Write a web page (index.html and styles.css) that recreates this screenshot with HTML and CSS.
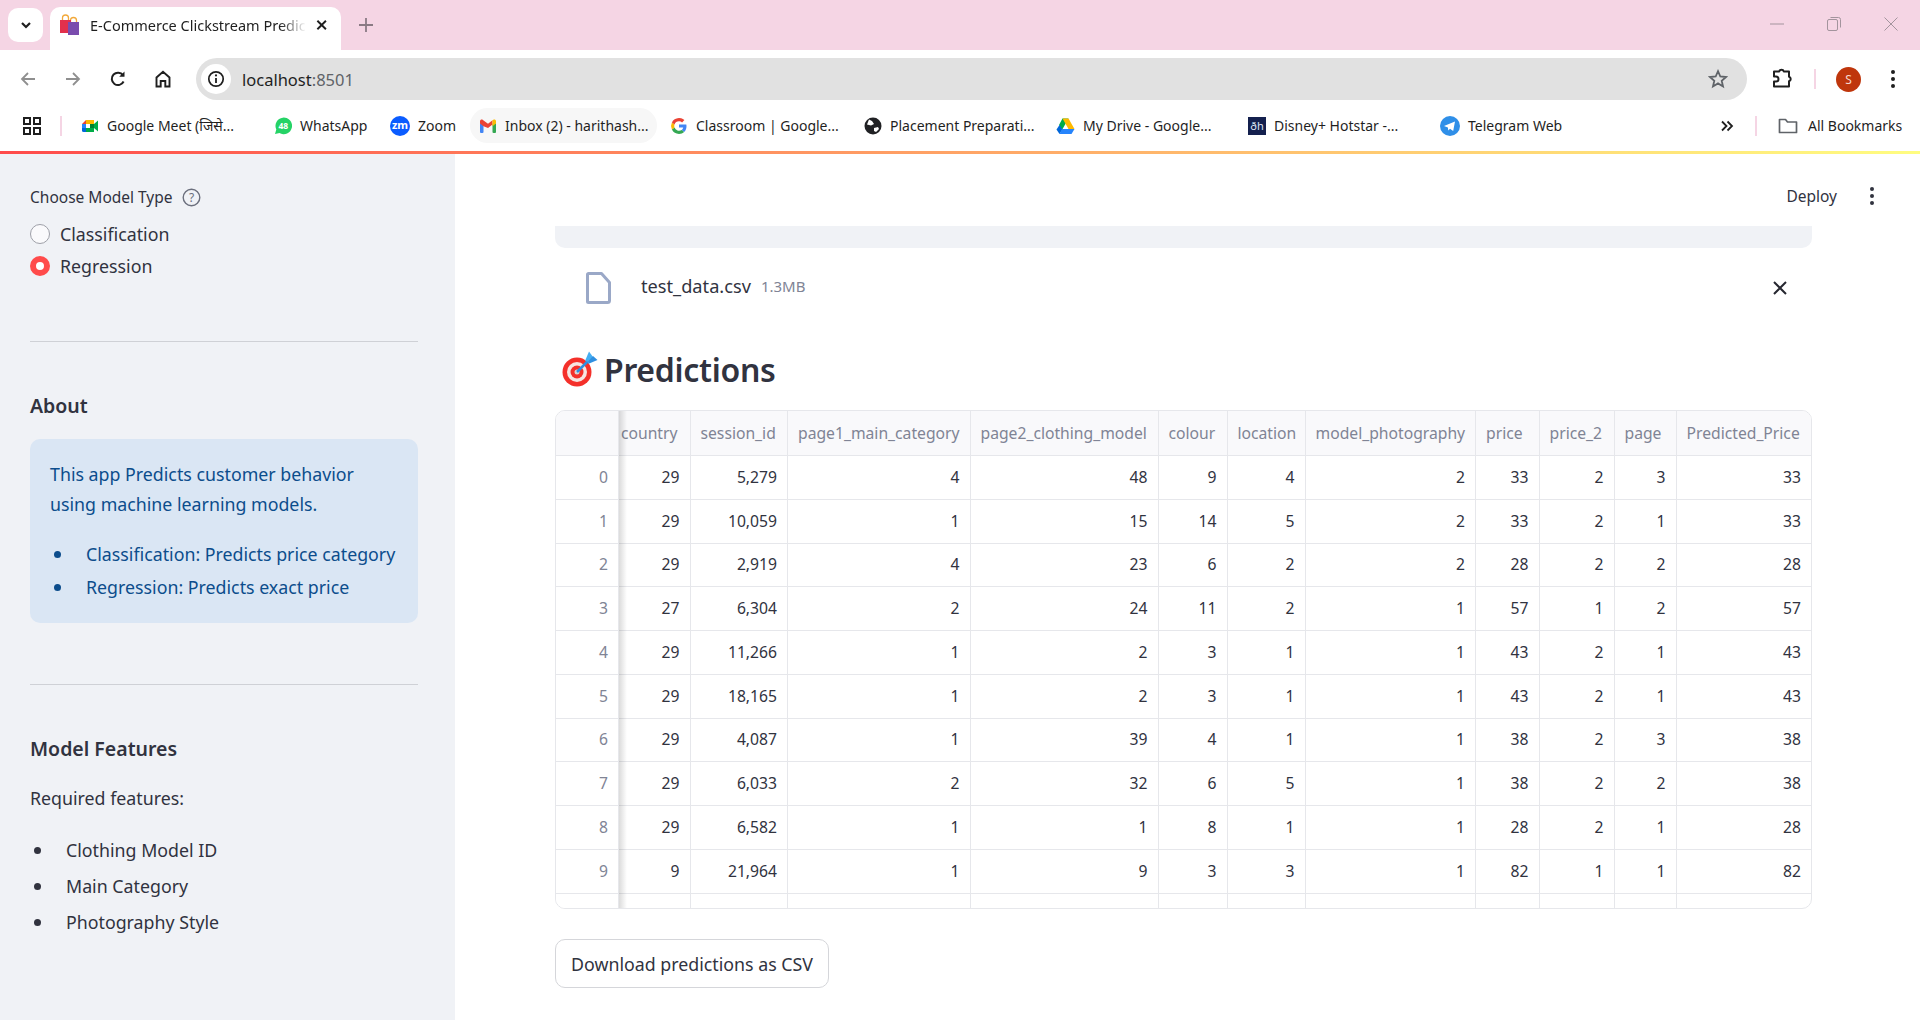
FILE: index.html
```html
<!DOCTYPE html>
<html lang="en">
<head>
  <meta charset="UTF-8" />
  <title>E-Commerce Clickstream Prediction</title>
  <meta name="viewport" content="width=device-width, initial-scale=1.0" />
  <link rel="stylesheet" href="styles.css">
</head>
<body>
  <!-- browser chrome -->
  <div class="tabstrip">
    <div class="tab-search">
      <svg width="14" height="14" viewBox="0 0 14 14"><path d="M3 5l4 4 4-4" fill="none" stroke="#1f1f1f" stroke-width="2.2"/></svg>
    </div>
    <div class="tab">
      <svg class="favicon" width="22" height="22" viewBox="0 0 22 22">
        <path d="M3.500 6V4a3 3 0 0 1 6 0v2M11.500 8V6.500a3 3 0 0 1 6 0V8" fill="none" stroke="#f2a93b" stroke-width="1.300"/>
        <rect x="1" y="6" width="11" height="13" fill="#e2304c"/>
        <rect x="9" y="8" width="11" height="13" fill="#7a4cae"/>
      </svg>
      <span class="tab-title">E-Commerce Clickstream Predic</span>
      <svg width="14" height="14" viewBox="0 0 14 14"><path d="M2.500 2.500l9 9M11.500 2.500l-9 9" stroke="#1f1f1f" stroke-width="2"/></svg>
    </div>
    <svg class="new-tab" width="16" height="16" viewBox="0 0 16 16"><path d="M8 1v14M1 8h14" stroke="#8a7a84" stroke-width="1.800"/></svg>
    <div class="win-btns">
      <svg width="16" height="16" viewBox="0 0 16 16"><path d="M1 8h14" stroke="#a3949d" stroke-width="1"/></svg>
      <svg width="16" height="16" viewBox="0 0 16 16"><rect x="1.500" y="3.500" width="10" height="11" rx="1.500" fill="none" stroke="#a3949d"/><path d="M4.500 1.500h8a2 2 0 0 1 2 2v8" fill="none" stroke="#a3949d"/></svg>
      <svg width="16" height="16" viewBox="0 0 16 16"><path d="M1.500 1.500l13 13M14.500 1.500l-13 13" stroke="#a3949d" stroke-width="1"/></svg>
    </div>
  </div>

  <div class="toolbar">
    <svg class="nav-btn" width="18" height="18" viewBox="0 0 18 18"><path d="M16 9H3M9 3L3 9l6 6" fill="none" stroke="#8f8f8f" stroke-width="1.800"/></svg>
    <svg class="nav-btn" width="18" height="18" viewBox="0 0 18 18"><path d="M2 9h13M9 3l6 6-6 6" fill="none" stroke="#8f8f8f" stroke-width="1.800"/></svg>
    <svg class="nav-btn" width="18" height="18" viewBox="0 0 18 18"><path d="M14.600 11.500A6.200 6.200 0 1 1 14 5.200" fill="none" stroke="#1f1f1f" stroke-width="2"/><path d="M15.500 1.500v5.300h-5.300z" fill="#1f1f1f"/></svg>
    <svg class="nav-btn" width="18" height="18" viewBox="0 0 18 18"><path d="M2.500 16.500V7.500L9 1.800l6.500 5.700v9h-4.200v-5.500H6.700v5.500z" fill="none" stroke="#1f1f1f" stroke-width="1.900"/></svg>
    <div class="omnibox">
      <span class="site-info">
        <svg width="18" height="18" viewBox="0 0 18 18"><circle cx="9" cy="9" r="7.200" fill="none" stroke="#1f1f1f" stroke-width="1.700"/><path d="M9 8v5" stroke="#1f1f1f" stroke-width="1.800"/><circle cx="9" cy="5.400" r="1.100" fill="#1f1f1f"/></svg>
      </span>
      <span class="url">localhost<span class="url-port">:8501</span></span>
      <svg class="star" width="20" height="20" viewBox="0 0 20 20"><path d="M10 2.200l2.300 5.300 5.700.5-4.300 3.800 1.300 5.600-5-3-5 3 1.300-5.600L2 8l5.700-.5z" fill="none" stroke="#5f6368" stroke-width="1.800"/></svg>
    </div>
    <svg class="puzzle" width="22" height="22" viewBox="0 0 22 22"><path d="M3 3.500h5.200a2.400 2.400 0 0 1 4.600 0H18v5.200a2.400 2.400 0 0 1 0 4.600v5.200H3v-5h2a2.500 2.500 0 0 0 0-5H3z" fill="none" stroke="#1f1f1f" stroke-width="2" stroke-linejoin="round"/></svg>
    <span class="tool-sep"></span>
    <span class="avatar">S</span>
    <span class="kebab kebab-dark"><i></i><i></i><i></i></span>
  </div>

  <div class="bookmarks">
    <svg class="apps" width="18" height="18" viewBox="0 0 18 18"><g fill="none" stroke="#1f1f1f" stroke-width="2"><rect x="1" y="1" width="6" height="6"/><rect x="11" y="1" width="6" height="6"/><rect x="1" y="11" width="6" height="6"/><rect x="11" y="11" width="6" height="6"/></g></svg>
    <span class="tool-sep"></span>
    <div class="bm-list">
      <div class="bm">
        <svg width="18" height="18" viewBox="0 0 18 18"><rect x="5" y="3" width="8" height="4" fill="#ffba00"/><path d="M5 3v4H1z" fill="#ea4335"/><rect x="1" y="7" width="4" height="4" fill="#2684fc"/><path d="M1 11h4v4H2.500A1.500 1.500 0 0 1 1 13.500z" fill="#0066da"/><rect x="5" y="11" width="8" height="4" fill="#00ac47"/><rect x="9" y="7" width="4" height="4" fill="#00832d"/><path d="M13 7l4-3.500v11L13 11z" fill="#00ac47"/></svg>
        <span>Google Meet (जिसे...</span>
      </div>
      <div class="bm">
        <svg width="18" height="18" viewBox="0 0 18 18"><path d="M1 17l1.300-4.500A8.300 8.300 0 1 1 5.500 16z" fill="#25d366"/><text x="9.300" y="12" text-anchor="middle" class="icon-text">48</text></svg>
        <span>WhatsApp</span>
      </div>
      <div class="bm">
        <svg width="20" height="20" viewBox="0 0 20 20"><circle cx="10" cy="10" r="10" fill="#0b5cff"/><text x="10" y="13.400" text-anchor="middle" class="icon-text icon-text-big">zm</text></svg>
        <span>Zoom</span>
      </div>
      <div class="bm bm-active">
        <svg width="18" height="18" viewBox="0 0 18 18"><rect x="1" y="6" width="3.500" height="10" rx="1" fill="#4285f4"/><rect x="13.500" y="6" width="3.500" height="10" rx="1" fill="#34a853"/><path d="M4.500 9.300L1 6.500V4.200C1 2.800 2.700 2 3.900 2.900L9 6.700l4.500-3.400v4.200L9 11z" fill="#ea4335"/><path d="M13.500 3.300l.6-.4C15.300 2 17 2.800 17 4.200v2.300L13.500 9.300z" fill="#fbbc04"/></svg>
        <span>Inbox (2) - harithash...</span>
      </div>
      <div class="bm">
        <svg width="18" height="18" viewBox="0 0 18 18"><path d="M16.500 9.200c0-.6-.1-1.100-.2-1.600H9v3h4.200a3.600 3.600 0 0 1-1.600 2.400l2.500 2c1.500-1.300 2.400-3.300 2.400-5.800z" fill="#4285f4"/><path d="M9 17c2.100 0 3.900-.7 5.100-1.900l-2.500-2a4.800 4.800 0 0 1-7.100-2.500L1.900 12.600A8 8 0 0 0 9 17z" fill="#34a853"/><path d="M4.500 10.600a4.800 4.800 0 0 1 0-3.200L1.900 5.400a8 8 0 0 0 0 7.200z" fill="#fbbc05"/><path d="M9 4.200c1.200 0 2.300.4 3.100 1.200l2.300-2.300A8 8 0 0 0 1.900 5.400l2.600 2A4.800 4.800 0 0 1 9 4.200z" fill="#ea4335"/></svg>
        <span>Classroom | Google...</span>
      </div>
      <div class="bm">
        <svg width="18" height="18" viewBox="0 0 18 18"><circle cx="9" cy="9" r="8.500" fill="#202124"/><path d="M5 2.500l3 1.500 2 3-3 1.500-4-1zM10 11l4-1 1 2-3 3-2-1z" fill="#fff"/></svg>
        <span>Placement Preparati...</span>
      </div>
      <div class="bm">
        <svg width="19" height="18" viewBox="0 0 19 18"><path d="M6.500 1.500h6L6 13 3 8z" fill="#00ac47"/><path d="M12.500 1.500L18.500 12h-6L6.500 1.500z" fill="#ffba00"/><path d="M.5 12.500L3.500 8 6.500 12.500l-3 4.500z" fill="#0066da"/><path d="M6 12h12.500l-3 5h-12z" fill="#2684fc"/></svg>
        <span>My Drive - Google...</span>
      </div>
      <div class="bm">
        <span class="disney">ðh</span>
        <span>Disney+ Hotstar -...</span>
      </div>
      <div class="bm">
        <svg width="20" height="20" viewBox="0 0 20 20"><circle cx="10" cy="10" r="10" fill="#2f8fe8"/><path d="M4 10l11-4.500-1.800 9.500-3.200-2.300-1.700 1.700-.4-3z" fill="#fff"/></svg>
        <span>Telegram Web</span>
      </div>
    </div>
    <svg class="more" width="14" height="14" viewBox="0 0 14 14"><path d="M2 2.500L6.500 7 2 11.500M7.500 2.500L12 7l-4.500 4.500" fill="none" stroke="#1f1f1f" stroke-width="1.800"/></svg>
    <span class="tool-sep"></span>
    <div class="all-bm">
      <svg width="20" height="18" viewBox="0 0 20 18"><path d="M1.500 15.500V2.500h6l2 2.500h9v10.500z" fill="none" stroke="#5f6368" stroke-width="1.700" stroke-linejoin="round"/></svg>
      <span>All Bookmarks</span>
    </div>
  </div>
  <div class="top-gradient"></div>

  <!-- app -->
  <div class="app">
    <aside class="sidebar">
      <div class="radio-label">
        <span>Choose Model Type</span>
        <svg width="19" height="19" viewBox="0 0 19 19"><circle cx="9.500" cy="9.500" r="8.300" fill="none" stroke="#6b6f7d" stroke-width="1.400"/><text x="9.500" y="13.700" text-anchor="middle" class="help-q">?</text></svg>
      </div>
      <div class="radio"><span class="radio-dot"></span>Classification</div>
      <div class="radio"><span class="radio-dot radio-on"></span>Regression</div>
      <hr class="divider divider-first">
      <h3 class="side-title">About</h3>
      <div class="info-box">
        <p>This app Predicts customer behavior using machine learning models.</p>
        <ul>
          <li>Classification: Predicts price category</li>
          <li>Regression: Predicts exact price</li>
        </ul>
      </div>
      <hr class="divider">
      <h3 class="side-title">Model Features</h3>
      <p class="side-text">Required features:</p>
      <ul class="side-list">
        <li>Clothing Model ID</li>
        <li>Main Category</li>
        <li>Photography Style</li>
      </ul>
    </aside>

    <main class="main">
      <div class="main-head">
        <span class="deploy">Deploy</span>
        <span class="kebab"><i></i><i></i><i></i></span>
      </div>
      <div class="content">
        <div class="dropzone-tail"></div>
        <div class="file-row">
          <svg width="26" height="32" viewBox="0 0 26 32"><path d="M2.500 1.500h13l8 9v18a2 2 0 0 1-2 2h-19a1 1 0 0 1-1-1V2.500a1 1 0 0 1 1-1z" fill="none" stroke="#9aa8c7" stroke-width="3" stroke-linejoin="round"/></svg>
          <span class="file-name">test_data.csv</span>
          <span class="file-size">1.3MB</span>
          <svg class="file-close" width="16" height="16" viewBox="0 0 16 16"><path d="M2 2l12 12M14 2L2 14" stroke="#262730" stroke-width="2"/></svg>
        </div>
        <h2 class="page-title">
          <svg width="38" height="38" viewBox="0 0 38 38">
            <circle cx="17" cy="22" r="14.500" fill="#f4302a"/>
            <circle cx="17" cy="22" r="10" fill="#f6e6e2"/>
            <circle cx="17" cy="22" r="6.500" fill="#f4302a"/>
            <circle cx="17" cy="22" r="2.500" fill="#d9d4d2"/>
            <path d="M17 22L29 10" stroke="#2f8fe0" stroke-width="2.500"/>
            <path d="M25 11L29 1.500 33 7 29 12z" fill="#45aef2"/>
            <path d="M28 14L37.500 10 33 6 28.500 11z" fill="#2f8fe0"/>
          </svg>
          <span>Predictions</span>
        </h2>
        <div class="table-wrap">
          <table class="pred-table">
            <colgroup>
              <col class="c-idx"><col class="c-country"><col class="c-session"><col class="c-page1">
              <col class="c-page2"><col class="c-colour"><col class="c-location"><col class="c-photo">
              <col class="c-price"><col class="c-price2"><col class="c-page"><col>
            </colgroup>
            <thead>
              <tr><th></th><th class="head-country">country</th><th>session_id</th><th>page1_main_category</th><th>page2_clothing_model</th><th>colour</th><th>location</th><th>model_photography</th><th>price</th><th>price_2</th><th>page</th><th>Predicted_Price</th></tr>
            </thead>
            <tbody>
              <tr><th>0</th><td>29</td><td>5,279</td><td>4</td><td>48</td><td>9</td><td>4</td><td>2</td><td>33</td><td>2</td><td>3</td><td>33</td></tr>
              <tr><th>1</th><td>29</td><td>10,059</td><td>1</td><td>15</td><td>14</td><td>5</td><td>2</td><td>33</td><td>2</td><td>1</td><td>33</td></tr>
              <tr><th>2</th><td>29</td><td>2,919</td><td>4</td><td>23</td><td>6</td><td>2</td><td>2</td><td>28</td><td>2</td><td>2</td><td>28</td></tr>
              <tr><th>3</th><td>27</td><td>6,304</td><td>2</td><td>24</td><td>11</td><td>2</td><td>1</td><td>57</td><td>1</td><td>2</td><td>57</td></tr>
              <tr><th>4</th><td>29</td><td>11,266</td><td>1</td><td>2</td><td>3</td><td>1</td><td>1</td><td>43</td><td>2</td><td>1</td><td>43</td></tr>
              <tr><th>5</th><td>29</td><td>18,165</td><td>1</td><td>2</td><td>3</td><td>1</td><td>1</td><td>43</td><td>2</td><td>1</td><td>43</td></tr>
              <tr><th>6</th><td>29</td><td>4,087</td><td>1</td><td>39</td><td>4</td><td>1</td><td>1</td><td>38</td><td>2</td><td>3</td><td>38</td></tr>
              <tr><th>7</th><td>29</td><td>6,033</td><td>2</td><td>32</td><td>6</td><td>5</td><td>1</td><td>38</td><td>2</td><td>2</td><td>38</td></tr>
              <tr><th>8</th><td>29</td><td>6,582</td><td>1</td><td>1</td><td>8</td><td>1</td><td>1</td><td>28</td><td>2</td><td>1</td><td>28</td></tr>
              <tr><th>9</th><td>9</td><td>21,964</td><td>1</td><td>9</td><td>3</td><td>3</td><td>1</td><td>82</td><td>1</td><td>1</td><td>82</td></tr>
              <tr><th></th><td></td><td></td><td></td><td></td><td></td><td></td><td></td><td></td><td></td><td></td><td></td></tr>
            </tbody>
          </table>
          <div class="freeze-shadow"></div>
        </div>
        <button class="download-btn">Download predictions as CSV</button>
      </div>
    </main>
  </div>
</body>
</html>
```

FILE: styles.css
```css
* {
  box-sizing: border-box;
}

html, body {
  margin: 0;
  height: 1020px;
  overflow: hidden;
}

body {
  font-family: "Noto Sans", sans-serif;
  color: #31333f;
  background: #fff;
  display: flex;
  flex-direction: column;
}

/* ---- tab strip ---- */
.tabstrip {
  height: 50px;
  flex: none;
  background: #f5d5e4;
  display: flex;
  align-items: flex-end;
  padding-left: 8px;
}

.tab-search {
  width: 35px;
  height: 34px;
  margin-bottom: 8px;
  background: #fff;
  border-radius: 10px;
  display: flex;
  align-items: center;
  justify-content: center;
}

.tab {
  width: 291px;
  height: 43px;
  margin-left: 7px;
  padding: 0 13px 8px 9px;
  background: #fff;
  border-radius: 10px 10px 0 0;
  display: flex;
  align-items: center;
  gap: 9px;
  font-size: 14.500px;
  color: #1f1f1f;
}

.favicon {
  flex: none;
}

.tab-title {
  flex: 1;
  white-space: nowrap;
  -webkit-mask-image: linear-gradient(to right, #000 88%, transparent);
  mask-image: linear-gradient(to right, #000 88%, transparent);
}

.new-tab {
  margin: 0 0 17px 17px;
}

.win-btns {
  margin-left: auto;
  align-self: flex-start;
  margin-top: 16px;
  padding-right: 21px;
  display: flex;
  gap: 41px;
}

/* ---- toolbar ---- */
.toolbar {
  height: 58px;
  flex: none;
  display: flex;
  align-items: center;
  padding: 0 0 0 19px;
}

.nav-btn {
  margin-right: 27px;
}

.nav-btn:nth-child(4) {
  margin-right: 24px;
}

.omnibox {
  width: 1551px;
  height: 42px;
  background: #e1e1e1;
  border-radius: 21px;
  display: flex;
  align-items: center;
  padding: 0 19px 0 5px;
  font-size: 16.500px;
}

.site-info {
  width: 30px;
  height: 30px;
  border-radius: 50%;
  background: #fff;
  display: flex;
  align-items: center;
  justify-content: center;
  margin-right: 11px;
}

.url {
  flex: 1;
  color: #1f1f1f;
}

.url-port {
  color: #5f6368;
}

.puzzle {
  margin-left: 24px;
}

.tool-sep {
  width: 2px;
  height: 20px;
  background: #f5d5e4;
  flex: none;
}

.toolbar .tool-sep {
  margin-left: 21px;
}

.avatar {
  width: 25px;
  height: 25px;
  margin-left: 20px;
  border-radius: 50%;
  background: #bf360c;
  color: #f6d8cc;
  font-size: 12px;
  display: flex;
  align-items: center;
  justify-content: center;
}

.kebab {
  display: flex;
  flex-direction: column;
  gap: 3px;
}

.kebab i {
  width: 4px;
  height: 4px;
  border-radius: 50%;
  background: #31333f;
}

.kebab-dark {
  margin-left: 30px;
}

.kebab-dark i {
  background: #1f1f1f;
}

/* ---- bookmarks bar ---- */
.bookmarks {
  height: 43px;
  flex: none;
  display: flex;
  align-items: center;
  padding: 0 0 8px 23px;
  font-size: 14px;
  color: #1f1f1f;
}

.apps {
  margin-right: 19px;
  flex: none;
}

.bm-list {
  margin-left: 10px;
  width: 1648px;
  flex: none;
  display: grid;
  grid-template-columns: 193px 116px 89px 191px 194px 192px 192px 192px 1fr;
}

.bm {
  height: 35px;
  padding-left: 9px;
  display: flex;
  align-items: center;
  gap: 8px;
  white-space: nowrap;
  border-radius: 18px;
}

.bm-active {
  background: #f7f7f7;
  margin-right: 4px;
}

.icon-text {
  font-size: 8.500px;
  font-weight: 700;
  fill: #fff;
}

.icon-text-big {
  font-size: 11px;
}

.disney {
  width: 18px;
  height: 18px;
  background: #14204e;
  color: #dfe6f5;
  font-size: 11px;
  line-height: 18px;
  text-align: center;
}

.more {
  flex: none;
}

.more + .tool-sep {
  margin-left: 21px;
}

.all-bm {
  margin-left: 21px;
  display: flex;
  align-items: center;
  gap: 10px;
  white-space: nowrap;
}

.top-gradient {
  height: 3px;
  flex: none;
  background: linear-gradient(to right, #ff4b4b, #fffd80);
}

/* ---- streamlit app ---- */
.app {
  flex: 1;
  display: flex;
  min-height: 0;
}

.sidebar {
  width: 455px;
  flex: none;
  background: #f0f2f6;
  padding: 31px 37px 0 30px;
  font-size: 17.800px;
  color: #31333f;
}

.radio-label {
  display: flex;
  align-items: center;
  gap: 9px;
  font-size: 15.500px;
  height: 24px;
  margin-bottom: 9px;
}

.help-q {
  font-size: 12px;
  fill: #6b6f7d;
}

.radio {
  height: 32px;
  display: flex;
  align-items: center;
  gap: 10px;
}

.radio-dot {
  width: 20px;
  height: 20px;
  border-radius: 50%;
  background: #fafafc;
  border: 1px solid #9ea0a8;
}

.radio-on {
  background: #fff;
  border: 6px solid #ff4b4b;
}

.divider {
  margin: 0;
  border: none;
  border-top: 1.500px solid #cfd1d6;
}

.divider-first {
  margin-top: 59px;
}

.side-title {
  margin: 50px 0 0;
  font-size: 19.500px;
  font-weight: 600;
  line-height: 28px;
}

.info-box {
  margin: 19px 0 61px;
  height: 184px;
  padding: 20px 20px 0;
  background: #dae6f4;
  border-radius: 10px;
  color: #0c4d8c;
}

.info-box p {
  margin: 0 0 19px;
  line-height: 30px;
}

.info-box ul,
.side-list {
  list-style: none;
  padding: 0 0 0 4px;
  white-space: nowrap;
}

.info-box ul {
  margin: 0;
  line-height: 33px;
}

.info-box li,
.side-list li {
  display: flex;
  align-items: center;
}

.info-box li::before,
.side-list li::before {
  content: "";
  width: 7px;
  height: 7px;
  margin-right: 25px;
  border-radius: 50%;
  background: currentColor;
  flex: none;
}

.side-text {
  margin: 20px 0 0;
  line-height: 30px;
}

.side-list {
  margin: 19px 0 0;
  line-height: 36px;
}

/* ---- main ---- */
.main {
  flex: 1;
  min-width: 0;
}

.main-head {
  height: 72px;
  padding: 12px 46px 0 0;
  display: flex;
  align-items: center;
  justify-content: flex-end;
  gap: 33px;
}

.deploy {
  font-size: 15.500px;
  color: #31333f;
}

.content {
  padding: 0 108px 0 100px;
}

.dropzone-tail {
  height: 22px;
  background: #f0f2f6;
  border-radius: 0 0 10px 10px;
}

.file-row {
  height: 80px;
  padding: 0 24px 0 31px;
  display: flex;
  align-items: center;
}

.file-name {
  margin: 0 0 4px 29px;
  font-size: 18.200px;
}

.file-size {
  margin: 0 0 4px 10px;
  font-size: 15px;
  color: #808495;
}

.file-close {
  margin-left: auto;
}

.page-title {
  margin: 0;
  height: 82px;
  display: flex;
  align-items: center;
  gap: 6px;
  padding-left: 5px;
  font-size: 32px;
  font-weight: 600;
  letter-spacing: -0.3px;
}

.table-wrap {
  position: relative;
  height: 499px;
  border: 1px solid #e6e7eb;
  border-radius: 10px;
  overflow: hidden;
}

.pred-table {
  width: 100%;
  table-layout: fixed;
  border-collapse: separate;
  border-spacing: 0;
  font-size: 15.700px;
  color: #31333f;
}

.c-idx { width: 63px; }
.c-country { width: 71.500px; }
.c-session { width: 97.500px; }
.c-page1 { width: 182.500px; }
.c-page2 { width: 188px; }
.c-colour { width: 69px; }
.c-location { width: 78px; }
.c-photo { width: 170.500px; }
.c-price { width: 63.500px; }
.c-price2 { width: 75px; }
.c-page { width: 62px; }

.pred-table th,
.pred-table td {
  height: 43.750px;
  padding: 0 10px 1px;
  border-right: 1px solid #e6e7eb;
  border-bottom: 1.500px solid #e6e7eb;
  text-align: right;
  font-weight: 400;
  white-space: nowrap;
  overflow: hidden;
}

.pred-table tr > *:last-child {
  border-right: none;
}

.pred-table thead th {
  height: 45px;
  background: #f9f9fb;
  color: #808495;
  text-align: left;
}

.pred-table thead th.head-country {
  padding-left: 0;
  padding-right: 12px;
  text-align: right;
}

.pred-table tbody th {
  color: #808495;
  background: #fff;
}

.freeze-shadow {
  position: absolute;
  left: 63px;
  top: 0;
  bottom: 0;
  width: 8px;
  background: linear-gradient(to right, rgba(0, 0, 0, 0.14), rgba(0, 0, 0, 0));
}

.download-btn {
  display: block;
  margin-top: 30px;
  width: 274px;
  height: 49px;
  padding: 0;
  background: #fff;
  border: 1.500px solid #d5d6da;
  border-radius: 10px;
  font-family: "Noto Sans", sans-serif;
  font-size: 17.800px;
  color: #31333f;
}
```
